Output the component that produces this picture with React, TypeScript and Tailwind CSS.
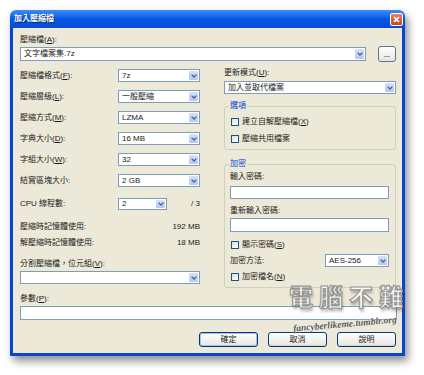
import React from 'react';

/* Small XP-style combo arrow */
function Chevron() {
  return (
    <svg width="6" height="4" viewBox="0 0 6 4">
      <path d="M0.6 0.6 L3 3 L5.4 0.6" fill="none" stroke="#4D6185" strokeWidth="1.3" />
    </svg>
  );
}

function Combo({ value, className }: { value: string; className: string }) {
  return (
    <div className={`flex items-stretch bg-white border border-[#7F9DB9] ${className}`}>
      <span className="flex-1 flex items-center pl-[3px] text-[8px] leading-none truncate">{value}</span>
      <span className="w-[9px] m-px flex items-center justify-center rounded-[1px] bg-gradient-to-b from-[#D6E1FC] to-[#B3C7F5]">
        <Chevron />
      </span>
    </div>
  );
}

function Check({ label }: { label: React.ReactNode }) {
  return (
    <div className="flex items-center h-[13px]">
      <span className="w-[8px] h-[8px] border border-[#1C5180] bg-gradient-to-br from-[#DCDCD7] to-white" />
      <span className="ml-[3px] text-[8px] leading-none">{label}</span>
    </div>
  );
}

function Btn({ label, primary }: { label: string; primary?: boolean }) {
  return (
    <div
      className={`w-[59px] h-[15px] flex items-center justify-center rounded-[3px] border border-[#003C74] bg-gradient-to-b from-white to-[#E6E5DD] text-[8px] leading-none ${
        primary ? 'shadow-[inset_0_0_0_1px_#A7C1EE]' : 'shadow-[inset_0_-1px_0_#D6D0C5]'
      }`}
    >
      {label}
    </div>
  );
}

const U = ({ c }: { c: string }) => <span className="underline">{c}</span>;

const leftRows: [React.ReactNode, string][] = [
  [<>壓縮檔格式(<U c="F" />):</>, '7z'],
  [<>壓縮層級(<U c="L" />):</>, '一般壓縮'],
  [<>壓縮方式(<U c="M" />):</>, 'LZMA'],
  [<>字典大小(<U c="D" />):</>, '16 MB'],
  [<>字組大小(<U c="W" />):</>, '32'],
  [<>結實區塊大小:</>, '2 GB'],
];

export default function App() {
  return (
    <div className="w-[424px] h-[375px] bg-white pt-[10px] pl-[10px] relative overflow-hidden font-['Liberation_Sans','Noto_Sans_CJK_TC',sans-serif] text-[#1a1a1a]">
      {/* ── Window ── */}
      <div className="w-[395px] h-[346px] flex flex-col rounded-t-[6px] overflow-hidden shadow-[3px_5px_8px_rgba(0,0,0,0.45)]">
        {/* Title bar */}
        <div className="h-[18px] flex items-center pl-[4px] pr-[2px] bg-gradient-to-b from-[#3D8EF7] via-[#0058E6] to-[#0A4AD0]">
          <span className="text-white text-[8px] font-bold leading-none [text-shadow:1px_1px_0_#0A1F73]">加入壓縮檔</span>
          <div className="ml-auto w-[13px] h-[13px] rounded-[2px] border border-white bg-gradient-to-b from-[#E8826A] to-[#C5401F] flex items-center justify-center">
            <svg width="7" height="7" viewBox="0 0 7 7">
              <path d="M1 1 L6 6 M6 1 L1 6" stroke="white" strokeWidth="1.6" />
            </svg>
          </div>
        </div>

        {/* Body */}
        <div className="flex-1 flex flex-col bg-[#ECE9D8] border-x-[3px] border-b-[3px] border-[#0A44D2] pl-[7px] pr-[5px] pt-[6px]">
          <div className="h-[11px] text-[8px] leading-[11px]">
            壓縮檔(<U c="A" />):
          </div>
          <div className="flex items-center h-[16px] mt-[1px]">
            <Combo value="文字檔案集.7z" className="w-[346px] h-[14px]" />
            <div className="ml-auto mr-px w-[18px] h-[16px] rounded-[3px] border border-[#5A7697] bg-gradient-to-b from-white to-[#E6E5DD] flex items-end justify-center pb-[4px]">
              <span className="w-[6px] h-px bg-[#9A9A9A]" />
            </div>
          </div>

          {/* Two columns */}
          <div className="flex mt-[2px] h-[224px]">
            {/* Left */}
            <div className="w-[180px] flex flex-col pt-[1px] text-[8px]">
              {leftRows.map(([label, value], i) => (
                <div key={i} className="h-[21px] flex items-center">
                  <span className="w-[98px] leading-none">{label}</span>
                  <Combo value={value} className="w-[82px] h-[13px]" />
                </div>
              ))}
              <div className="h-[26px] flex items-center">
                <span className="w-[98px] leading-none">CPU 線程數:</span>
                <Combo value="2" className="w-[49px] h-[12px]" />
                <span className="ml-auto leading-none">/ 3</span>
              </div>
              <div className="h-[16px] mt-[2px] flex items-center justify-between leading-none">
                <span>壓縮時記憶體使用:</span>
                <span>192 MB</span>
              </div>
              <div className="h-[16px] flex items-center justify-between leading-none">
                <span>解壓縮時記憶體使用:</span>
                <span>18 MB</span>
              </div>
              <div className="h-[11px] mt-[7px] leading-[11px]">
                分割壓縮檔，位元組(<U c="V" />):
              </div>
              <Combo value="" className="w-[180px] h-[13px] mt-[2px]" />
            </div>

            {/* Right */}
            <div className="w-[172px] ml-[24px] flex flex-col text-[8px]">
              <div className="h-[11px] mt-[3px] leading-[11px]">
                更新模式(<U c="U" />):
              </div>
              <Combo value="加入並取代檔案" className="w-[172px] h-[13px] mt-[3px]" />

              <div className="relative mt-[12px] h-[44px] border border-[#D0D0BF] rounded-[3px] pl-[6px] pt-[6px]">
                <span className="absolute -top-[7px] left-[4px] px-px h-[11px] leading-[11px] bg-[#ECE9D8] text-[#0046D5]">選項</span>
                <div className="h-[17px] flex items-center">
                  <Check label={<>建立自解壓縮檔(<U c="X" />)</>} />
                </div>
                <div className="h-[17px] flex items-center">
                  <Check label="壓縮共用檔案" />
                </div>
              </div>

              <div className="relative mt-[14px] h-[124px] border border-[#D0D0BF] rounded-[3px] pl-[5px] pr-[6px] pt-[6px]">
                <span className="absolute -top-[7px] left-[4px] px-px h-[11px] leading-[11px] bg-[#ECE9D8] text-[#0046D5]">加密</span>
                <div className="h-[11px] leading-[11px]">輸入密碼:</div>
                <div className="mt-[4px] h-[13px] bg-white border border-[#7F9DB9]" />
                <div className="mt-[6px] h-[11px] leading-[11px]">重新輸入密碼:</div>
                <div className="mt-[2px] h-[14px] bg-white border border-[#7F9DB9]" />
                <div className="mt-[6px] pl-px">
                  <Check label={<>顯示密碼(<U c="S" />)</>} />
                </div>
                <div className="mt-[2px] h-[15px] flex items-center">
                  <span className="leading-none">加密方法:</span>
                  <Combo value="AES-256" className="ml-auto w-[64px] h-[13px]" />
                </div>
                <div className="mt-[2px] pl-px">
                  <Check label={<>加密檔名(<U c="N" />)</>} />
                </div>
              </div>
            </div>
          </div>

          <div className="h-[11px] mt-[5px] text-[8px] leading-[11px]">
            參數(<U c="P" />):
          </div>
          <div className="mt-[2px] h-[14px] bg-white border border-[#7F9DB9]" />

          <div className="mt-[12px] mr-[1px] flex justify-end gap-[10px]">
            <Btn label="確定" primary />
            <Btn label="取消" />
            <Btn label="說明" />
          </div>
        </div>
      </div>

      {/* Watermark over the dialog */}
      <div className="absolute left-[289px] top-[284px] flex gap-[6px] text-[24px] leading-none font-bold text-white opacity-90 [-webkit-text-stroke:1.2px_#8C8C8C] [text-shadow:1px_3px_3px_rgba(0,0,0,0.35)] font-['Noto_Sans_CJK_TC',sans-serif]">
        <span>電</span>
        <span>腦</span>
        <span>不</span>
        <span>難</span>
      </div>
      <div className="absolute left-[293px] top-[320px] -rotate-[5deg] text-[9.5px] font-bold italic leading-none text-[#5A5A5A] font-['Liberation_Serif',serif] [text-shadow:0_0_2px_white]">
        fancyberlikeme.tumblr.org
      </div>
    </div>
  );
}
